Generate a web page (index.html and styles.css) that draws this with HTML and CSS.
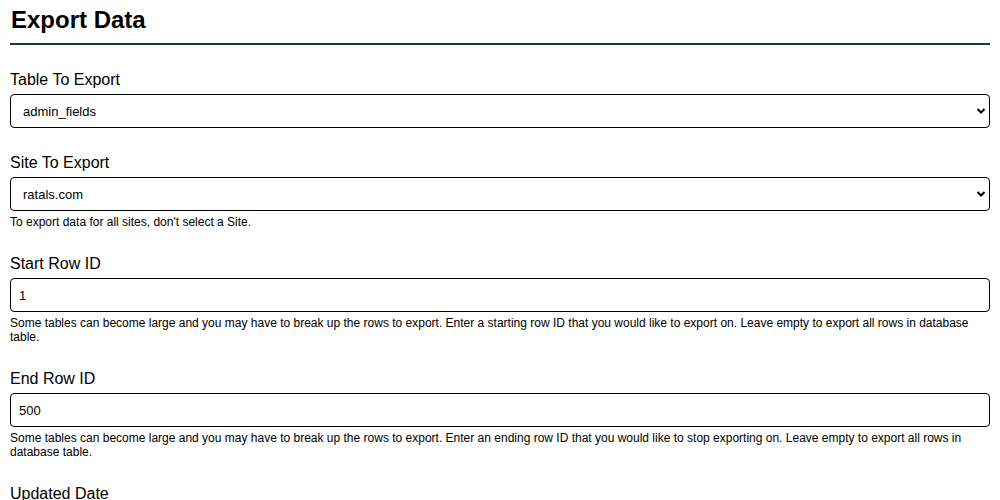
FILE: index.html
```html
<!DOCTYPE html>
<html>
<head>
<meta charset="utf-8">
<link rel="stylesheet" href="styles.css">
</head>
<body>
<div class="page">
  <h1 class="title">Export Data</h1>
  <form class="form">
    <div class="group">
      <label class="label">Table To Export</label>
      <div class="select-wrap">
        <select class="control select"><option>admin_fields</option></select>
        <svg class="chev" width="10" height="8" viewBox="0 0 10 8"><path d="M1.5 2 L5 5.5 L8.5 2" fill="none" stroke="#000" stroke-width="2"/></svg>
      </div>
    </div>
    <div class="group">
      <label class="label">Site To Export</label>
      <div class="select-wrap">
        <select class="control select"><option>ratals.com</option></select>
        <svg class="chev" width="10" height="8" viewBox="0 0 10 8"><path d="M1.5 2 L5 5.5 L8.5 2" fill="none" stroke="#000" stroke-width="2"/></svg>
      </div>
      <p class="hint">To export data for all sites, don't select a Site.</p>
    </div>
    <div class="group">
      <label class="label">Start Row ID</label>
      <input class="control input" type="text" value="1">
      <p class="hint">Some tables can become large and you may have to break up the rows to export. Enter a starting row ID that you would like to export on. Leave empty to export all rows in database table.</p>
    </div>
    <div class="group">
      <label class="label">End Row ID</label>
      <input class="control input" type="text" value="500">
      <p class="hint">Some tables can become large and you may have to break up the rows to export. Enter an ending row ID that you would like to stop exporting on. Leave empty to export all rows in database table.</p>
    </div>
    <div class="group">
      <label class="label">Updated Date</label>
    </div>
  </form>
</div>
</body>
</html>
```
FILE: styles.css
```css
html, body {
  margin: 0;
  padding: 0;
  background: #fff;
}
body {
  font-family: "Liberation Sans", Arial, sans-serif;
  color: #000;
}
.page {
  padding: 0 10px;
}
.title {
  margin: 0;
  padding: 6px 1px 9px;
  font-size: 24px;
  font-weight: bold;
  line-height: 28px;
  border-bottom: 2px solid #153746;
}
.form {
  padding-top: 26px;
}
.group {
  display: flex;
  flex-direction: column;
  margin-bottom: 26px;
}
.label {
  font-size: 16px;
  line-height: 18px;
  margin-bottom: 5px;
}
.select-wrap {
  position: relative;
}
.control {
  box-sizing: border-box;
  width: 100%;
  height: 34px;
  border: 1px solid #000;
  border-radius: 4px;
  background: #fff;
  font-family: "Liberation Sans", Arial, sans-serif;
  font-size: 13px;
  color: #000;
  margin: 0;
  outline: none;
}
.select {
  appearance: none;
  -webkit-appearance: none;
  padding: 0 12px;
  display: block;
}
.input {
  padding: 0 8px;
  display: block;
}
.chev {
  position: absolute;
  right: 4px;
  top: 13px;
  pointer-events: none;
}
.hint {
  margin: 4px 0 0;
  font-size: 12px;
  line-height: 14px;
}
```
